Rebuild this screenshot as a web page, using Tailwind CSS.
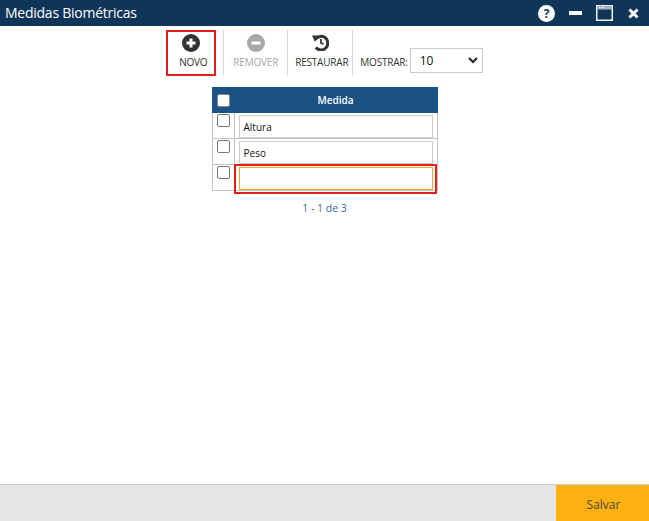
<!DOCTYPE html>
<html lang="pt">
<head>
    <meta charset="UTF-8">
    <title>Medidas Biométricas</title>
    <script src="https://cdn.jsdelivr.net/npm/@tailwindcss/browser@4"></script>
</head>
<body class="bg-white font-['Open_Sans',sans-serif]">
    <div class="w-[649px] h-[521px] flex flex-col overflow-hidden">
        <!-- Title bar -->
        <div class="h-[26px] bg-[#0f3559] flex items-center text-white shrink-0">
            <span class="ml-[5px] text-[14px] tracking-[-0.25px] leading-[24px] flex-1">Medidas Biométricas</span>
            <svg class="w-[17px] h-[17px] mr-[14px]" viewBox="0 0 17 17"><circle cx="8.5" cy="8.5" r="8.5" fill="#fff"/><text x="8.5" y="13" text-anchor="middle" font-size="12" font-weight="700" fill="#0f3559" font-family="Open Sans">?</text></svg>
            <div class="w-[13px] h-[4px] bg-white mr-[14px]"></div>
            <svg class="w-[17px] h-[16px] mr-[15px]" viewBox="0 0 17 16"><rect x="0.75" y="0.75" width="15.5" height="14.5" fill="none" stroke="#f2f5f8" stroke-width="1.5"/><rect x="1.5" y="1.5" width="14" height="3" fill="#aab6c2"/><path d="M3 2.5h1M5 2.5h1M7 2.5h1" stroke="#fff"/></svg>
            <svg class="w-[11px] h-[11px] mr-[10px]" viewBox="0 0 11 11"><path d="M1.5 1.5l8 8M9.5 1.5l-8 8" stroke="#fff" stroke-width="3"/></svg>
        </div>

        <!-- Toolbar -->
        <div class="mt-[4px] h-[46px] flex justify-center items-stretch shrink-0">
            <button class="relative w-[50px] flex flex-col items-center text-[#333]">
                <svg class="mt-[4px] w-[18px] h-[18px]" viewBox="0 0 18 18"><circle cx="9" cy="9" r="9" fill="#333"/><path d="M9 4.5v9M4.5 9h9" stroke="#fff" stroke-width="3"/></svg>
                <span class="mt-[3px] ml-[4px] text-[10px] tracking-[-0.2px] leading-[14px]">NOVO</span>
                <span class="absolute inset-0 border-2 border-[#e41e20]"></span>
            </button>
            <div class="w-px bg-[#d4d8dc] ml-[7px]"></div>
            <button class="w-[63px] flex flex-col items-center text-[#a8a8a8]">
                <svg class="mt-[4px] w-[18px] h-[18px]" viewBox="0 0 18 18"><circle cx="9" cy="9" r="9" fill="#a8a8a8"/><path d="M4.5 9h9" stroke="#fff" stroke-width="3"/></svg>
                <span class="mt-[3px] text-[10px] tracking-[-0.2px] leading-[14px]">REMOVER</span>
            </button>
            <div class="w-px bg-[#d4d8dc]"></div>
            <button class="w-[64px] flex flex-col items-center text-[#333]">
                <svg class="mt-[4px] mb-[1px] w-[17px] h-[17px]" viewBox="0 0 17 17" fill="none"><path d="M3.5 5.2A6.8 6.8 0 1 1 3.8 13.5" stroke="#333" stroke-width="3"/><path d="M0 1.5h7l-4 6.5z" fill="#333"/><path d="M9 5v4l2.5 1.2" stroke="#333" stroke-width="1.8"/></svg>
                <span class="mt-[3px] ml-[3px] text-[10px] tracking-[-0.2px] leading-[14px]">RESTAURAR</span>
            </button>
            <div class="w-px bg-[#d4d8dc]"></div>
            <div class="flex items-start ml-[7px] pt-[18px]">
                <span class="text-[10px] tracking-[-0.2px] leading-[14px] text-[#333] mr-[2px] mt-[7px]">MOSTRAR:</span>
                <div class="w-[73px] h-[25px] border border-[#ccc] flex items-center justify-between pl-[9px] pr-[4px] text-[12px] text-[#111]">
                    <span>10</span>
                    <svg class="w-[10px] h-[7px]" viewBox="0 0 10 7" fill="none"><path d="M1 1l4 4 4-4" stroke="#222" stroke-width="2"/></svg>
                </div>
            </div>
        </div>

        <!-- Table -->
        <div class="mt-[11px] mx-auto w-[226px] shrink-0">
            <div class="h-[26px] bg-[#1b5285] flex items-center">
                <span class="ml-[5px] w-[13px] h-[13px] border border-[#888] bg-white rounded-[2px]"></span>
                <span class="ml-[4px] flex-1 text-center text-white text-[10px] font-semibold">Medida</span>
            </div>
            <div class="h-[26px] flex border-x border-b border-[#bcc6c8]">
                <div class="w-[22px] border-r border-[#bcc6c8] pl-[4px] pt-px"><span class="block w-[13px] h-[13px] border border-[#777] rounded-[2px]"></span></div>
                <div class="flex-1 pl-[4px] pr-[4px] pt-[2px]"><div class="h-[23px] border border-[#ccc] pl-[4px] text-[10px] leading-[22px] text-[#111]">Altura</div></div>
            </div>
            <div class="h-[26px] flex border-x border-b border-[#bcc6c8]">
                <div class="w-[22px] border-r border-[#bcc6c8] pl-[4px] pt-px"><span class="block w-[13px] h-[13px] border border-[#777] rounded-[2px]"></span></div>
                <div class="flex-1 pl-[4px] pr-[4px] pt-[2px]"><div class="h-[23px] border border-[#ccc] pl-[4px] text-[10px] leading-[22px] text-[#111]">Peso</div></div>
            </div>
            <div class="relative h-[26px] flex border-x border-b border-[#bcc6c8]">
                <div class="w-[22px] border-r border-[#bcc6c8] pl-[4px] pt-px"><span class="block w-[13px] h-[13px] border border-[#777] rounded-[2px]"></span></div>
                <div class="flex-1 pl-[4px] pr-[4px] pt-[2px]"><div class="h-[23px] border border-[#f5a623]"></div></div>
                <span class="absolute left-[21px] top-[-1px] w-[203px] h-[30px] border-2 border-[#e41e20]"></span>
            </div>
            <div class="mt-[10px] text-center text-[10.5px] text-[#3a6a96]">1 - 1 de 3</div>
        </div>

        <!-- Footer -->
        <div class="mt-auto h-[37px] bg-[#e5e5e5] border-t border-[#cfcfcf] flex justify-end shrink-0">
            <button class="w-[93px] bg-[#ffb111] text-[#4a4a3a] text-[12px] pt-[3px] pl-[2px]">Salvar</button>
        </div>
    </div>
</body>
</html>
